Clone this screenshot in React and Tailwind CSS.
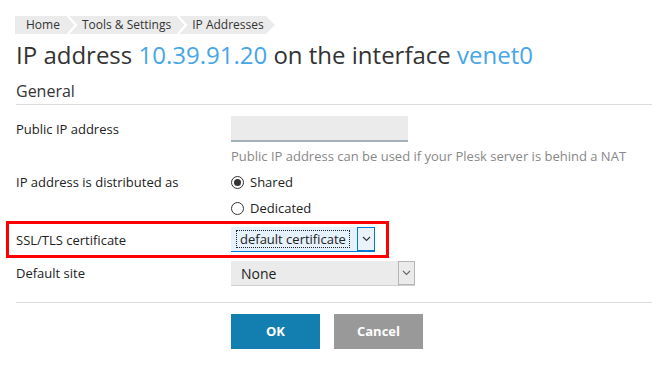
import React from "react";

const Chevron = () => (
  <svg width="12" height="18" viewBox="0 0 12 18" className="block">
    <rect x="0" y="0" width="12" height="18" fill="#ebebeb" />
    <polyline points="1,-1 10,9 1,19" fill="none" stroke="#ffffff" strokeWidth="2.2" />
  </svg>
);

const Caret = ({ color = "#555" }) => (
  <svg width="9" height="6" viewBox="0 0 9 6">
    <polyline points="1,1 4.5,4.5 8,1" fill="none" stroke={color} strokeWidth="1.1" />
  </svg>
);

export default function App() {
  return (
    <div className="w-[652px] h-[367px] bg-white text-[#222] overflow-hidden" style={{ fontFamily: '"Open Sans", sans-serif' }}>
      <div className="pt-[16px] pl-[15px]">
        <div className="flex h-[18px] text-[12px] leading-[18px] text-[#333]">
          <div className="bg-[#ebebeb] pl-[11px] pr-[6px]">Home</div>
          <Chevron />
          <div className="bg-[#ebebeb] pl-[4px] pr-[5px]">Tools &amp; Settings</div>
          <Chevron />
          <div className="bg-[#ebebeb] pl-[4px] pr-[2px]">IP Addresses</div>
          <svg width="10" height="18" viewBox="0 0 10 18" className="block">
            <polygon points="0,0 9,9 0,18" fill="#ebebeb" />
          </svg>
        </div>
      </div>
      <h1 className="pl-[16px] mt-[5px] text-[24px] leading-[32px] text-[#333]">
        IP address <span className="text-[#46a6e6]">10.39.91.20</span> on the interface <span className="text-[#46a6e6]">venet0</span>
      </h1>
      <div className="ml-[16px] mt-[9px] border-b border-[#dcdcdc] pb-[2px] text-[16px] leading-[22px] text-[#333]">General</div>

      <div className="pl-[16px] text-[13px]">
        <div className="flex mt-[11px]">
          <div className="w-[215px] pt-[4px] leading-[18px]">Public IP address</div>
          <div className="flex flex-col">
            <div className="w-[177px] h-[26px] bg-[#ebebeb] border-b-2 border-[#a2b0b8]"></div>
            <div className="mt-[5px] text-[#888] leading-[18px]">Public IP address can be used if your Plesk server is behind a NAT</div>
          </div>
        </div>

        <div className="flex mt-[8px]">
          <div className="w-[215px] leading-[18px]">IP address is distributed as</div>
          <div className="flex flex-col gap-[8px] leading-[18px]">
            <label className="flex items-center gap-[6px]">
              <span className="w-[13px] h-[13px] rounded-full border border-[#333] flex items-center justify-center">
                <span className="w-[7px] h-[7px] rounded-full bg-[#333]"></span>
              </span>
              Shared
            </label>
            <label className="flex items-center gap-[6px]">
              <span className="w-[13px] h-[13px] rounded-full border border-[#333]"></span>
              Dedicated
            </label>
          </div>
        </div>

        <div className="relative flex items-center mt-[10px] h-[25px]">
          <div className="absolute left-[-10px] top-[-6px] w-[383px] h-[37px] border-[3px] border-[#f00] pointer-events-none"></div>
          <div className="w-[215px] leading-[18px]">SSL/TLS certificate</div>
          <div className="flex items-stretch h-[25px] w-[144px] bg-[#e5f1fb] border-b border-[#0078d7]">
            <div className="flex-1 flex items-center pl-[5px] pr-[3px] overflow-hidden">
              <span className="border border-dotted border-[#222] px-[3px] leading-[16px] text-[13px] whitespace-nowrap">default certificate</span>
            </div>
            <div className="w-[18px] border border-[#0078d7] bg-[#e9f3fc] flex items-center justify-center">
              <Caret color="#333" />
            </div>
          </div>
        </div>

        <div className="flex items-center mt-[9px] h-[25px]">
          <div className="w-[215px] leading-[18px] -mt-[2px]">Default site</div>
          <div className="flex items-stretch h-[25px] w-[184px] bg-[#ebebeb] border-b border-[#d0d0d0]">
            <div className="flex-1 flex items-center pl-[10px] text-[14px]">None</div>
            <div className="w-[17px] border border-[#b5b5b5] flex items-center justify-center">
              <Caret color="#666" />
            </div>
          </div>
        </div>

        <div className="border-b border-[#dcdcdc] mt-[16px]"></div>

        <div className="flex gap-[14px] ml-[215px] mt-[11px]">
          <button className="w-[89px] h-[35px] bg-[#137fb0] text-white font-bold text-[13px]">OK</button>
          <button className="w-[89px] h-[35px] bg-[#999999] text-white font-bold text-[13px]">Cancel</button>
        </div>
      </div>
    </div>
  );
}
